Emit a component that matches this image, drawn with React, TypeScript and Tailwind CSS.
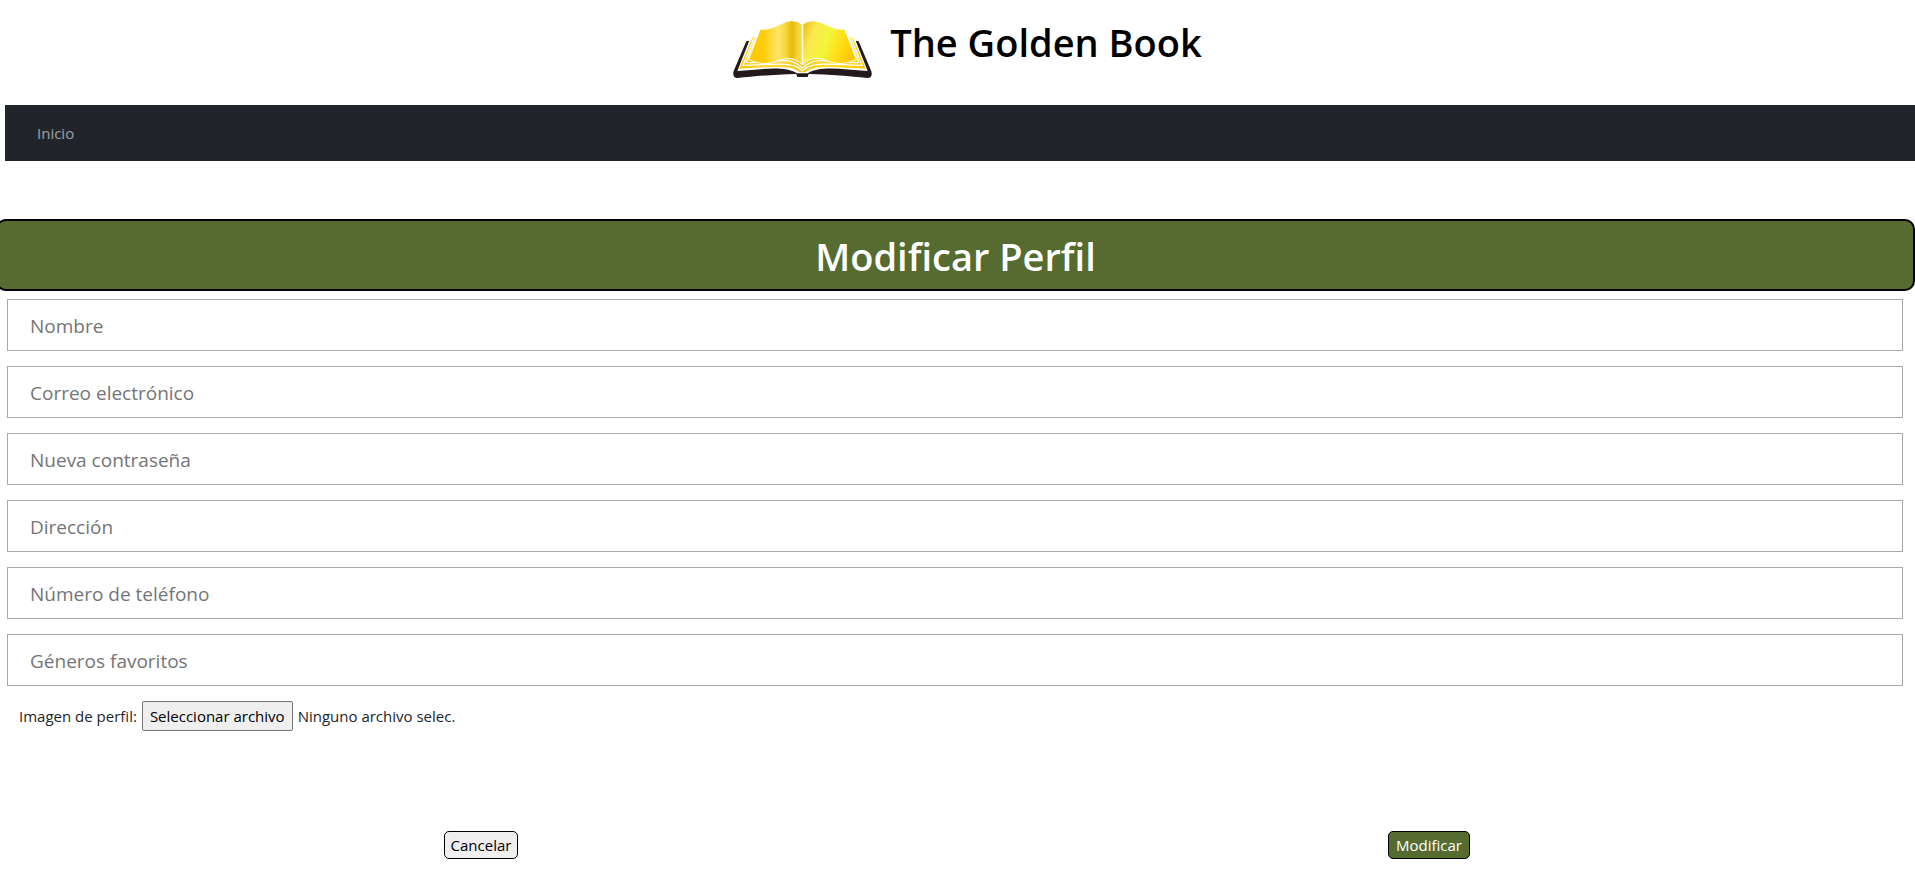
import { useRef, useState } from "react";

const fields = [
  { id: "nombre", label: "Nombre", type: "text" },
  { id: "correo", label: "Correo electrónico", type: "email" },
  { id: "contrasena", label: "Nueva contraseña", type: "password" },
  { id: "direccion", label: "Dirección", type: "text" },
  { id: "telefono", label: "Número de teléfono", type: "tel" },
  { id: "generos", label: "Géneros favoritos", type: "text" },
];

function BookLogo() {
  return (
    <svg viewBox="0 0 465 225" className="h-[75px] w-[155px] shrink-0" role="img" aria-label="Libro dorado">
      <defs>
        <linearGradient id="leftPage" x1="0" x2="1" y1="0" y2="0">
          <stop offset="0" stopColor="#fdc700" />
          <stop offset="0.28" stopColor="#ffcd0c" />
          <stop offset="0.55" stopColor="#ffe56a" />
          <stop offset="0.68" stopColor="#f8d83c" />
          <stop offset="0.81" stopColor="#e6b90c" />
          <stop offset="0.9" stopColor="#f4d032" />
          <stop offset="1" stopColor="#f7dc50" />
        </linearGradient>
        <linearGradient id="rightPage" x1="0" x2="1" y1="0.2" y2="0.5">
          <stop offset="0" stopColor="#edc51c" />
          <stop offset="0.2" stopColor="#fae850" />
          <stop offset="0.48" stopColor="#f3f63a" />
          <stop offset="0.72" stopColor="#fee01a" />
          <stop offset="1" stopColor="#fdc700" />
        </linearGradient>
        <linearGradient id="edges" x1="0" x2="1" y1="0" y2="0">
          <stop offset="0" stopColor="#fdc800" />
          <stop offset="0.32" stopColor="#fdd843" />
          <stop offset="0.5" stopColor="#f1c51c" />
          <stop offset="0.7" stopColor="#fae02f" />
          <stop offset="1" stopColor="#fdc800" />
        </linearGradient>
      </defs>
      <path d="M73 92 L64 94 L26 183 Q21 204 38 204 C90 199 150 193 214 192 L217 201 L248 201 L251 192 C315 193 375 199 427 204 Q444 203 439 184 L401 94 L392 92 L350 165 L115 165 Z" fill="#241a1c" />
      <path d="M77 82 L37 183 C110 178 180 166 216 190 L248 190 C284 166 355 178 428 183 L388 82 Z" fill="#fff" />
      <path d="M83 80 L43 176 C105 174 190 163 217 182 L224 187 L241 187 L248 182 C275 163 360 174 422 176 L382 80 Z" fill="url(#edges)" />
      <path d="M90 76 L54 166 C115 167 187 153 220 173 L232 182 L245 173 C278 153 350 167 411 166 L375 76" fill="none" stroke="#fff" strokeWidth="4" />
      <path d="M98 70 L64 157 C135 163 180 138 218 163 L232 174 L247 163 C285 138 330 163 401 157 L367 70" fill="url(#edges)" stroke="#fff" strokeWidth="4" />
      <path d="M106 57 C146 62 167 34 199 32 Q218 31 232 43 L232 165 C211 139 180 143 157 153 C122 168 94 158 71 149 Z" fill="url(#leftPage)" stroke="#fff" strokeWidth="3" />
      <path d="M359 57 C319 62 298 34 266 32 Q247 31 233 43 L233 165 C254 139 285 143 308 153 C343 168 371 158 394 149 Z" fill="url(#rightPage)" stroke="#fff" strokeWidth="3" />
      <path d="M232.500 43 V158" stroke="#fffbe0" strokeWidth="4" />
      <path d="M60 60 L104 60 L100 68 L74 91 L60 91 Z M405 60 L361 60 L365 68 L391 91 L405 91 Z" fill="#fff" />
    </svg>
  );
}

export default function App() {
  const picker = useRef<HTMLInputElement>(null);
  const [fileName, setFileName] = useState("Ninguno archivo selec.");

  return (
    <div className="overflow-x-hidden bg-white pb-9 font-['Open_Sans','Noto_Sans',sans-serif] text-base text-[#212529]">
      <header className="flex h-[105px] items-start justify-center gap-[10px] pt-[10px] pl-3">
        <BookLogo />
        <h1 className="pt-2 text-[38px] leading-12 font-semibold whitespace-nowrap text-black">The Golden Book</h1>
      </header>

      <nav className="ml-[5px] flex h-14 items-center bg-[#212529] px-8">
        <a href="#inicio" className="text-[15px] text-white/55">Inicio</a>
      </nav>

      <main className="pt-[58px]">
        <h2 className="-ml-1 flex h-[72px] items-center justify-center rounded-[10px] border-2 border-black bg-[#556b2f] pt-[2px] text-[38px] leading-12 font-semibold text-white">
          Modificar Perfil
        </h2>

        <form className="mt-2 mr-3 ml-[7px]" onSubmit={(e) => e.preventDefault()}>
          <div className="flex flex-col gap-[15px]">
            {fields.map((f) => (
              <input
                key={f.id}
                id={f.id}
                name={f.id}
                type={f.type}
                placeholder={f.label}
                aria-label={f.label}
                className="h-[52px] w-full border border-[#a9a9a9] bg-white px-[22px] pt-[2px] text-[19px] text-black placeholder:text-[#757575]"
              />
            ))}
          </div>

          <div className="mt-[15px] flex items-center gap-[5px] pl-3 text-[15px]">
            <label htmlFor="imagen">Imagen de perfil:</label>
            <input
              ref={picker}
              id="imagen"
              type="file"
              accept="image/*"
              className="sr-only"
              onChange={(e) => setFileName(e.target.files?.[0]?.name ?? "Ninguno archivo selec.")}
            />
            <button
              type="button"
              onClick={() => picker.current?.click()}
              className="h-[30px] rounded-[2px] border border-[#767676] bg-[#efefef] px-[7px] text-black"
            >
              Seleccionar archivo
            </button>
            <span>{fileName}</span>
          </div>

          <div className="mt-[100px] grid grid-cols-2 justify-items-center text-[15px]">
            <button type="button" className="h-7 rounded-[5px] border border-black bg-[#efefef] px-[6px] leading-6 text-black">
              Cancelar
            </button>
            <button type="submit" className="h-7 rounded-[5px] border border-black bg-[#556b2f] px-[7px] leading-6 text-white">
              Modificar
            </button>
          </div>
        </form>
      </main>
    </div>
  );
}
